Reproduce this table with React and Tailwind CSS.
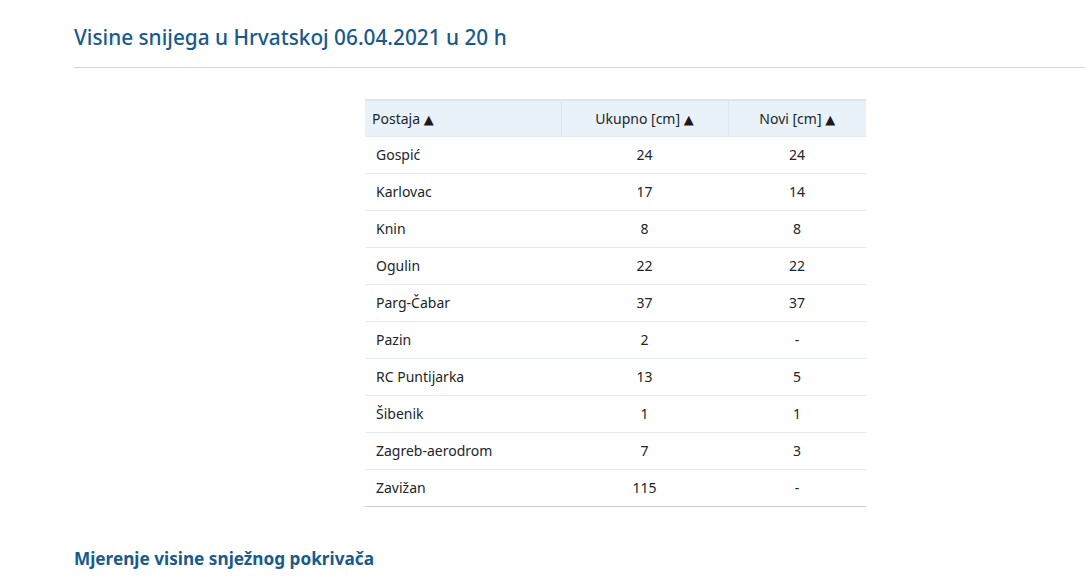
const rows = [
  ['Gospić', '24', '24'],
  ['Karlovac', '17', '14'],
  ['Knin', '8', '8'],
  ['Ogulin', '22', '22'],
  ['Parg-Čabar', '37', '37'],
  ['Pazin', '2', '-'],
  ['RC Puntijarka', '13', '5'],
  ['Šibenik', '1', '1'],
  ['Zagreb-aerodrom', '7', '3'],
  ['Zavižan', '115', '-'],
];

function Arrow() {
  return <span className="font-['DejaVu_Sans',sans-serif] text-[13px] leading-none text-[#1b1b1b]">▲</span>;
}

export default function App() {
  return (
    <div className="min-h-[588px] bg-white font-['Noto_Sans',sans-serif] text-[#212529]">
      <div className="pl-[74px] pt-[21px]">
        {/* Title */}
        <h1 className="text-[20.8px] leading-[32px] font-medium text-[#175a8c]">
          Visine snijega u Hrvatskoj 06.04.2021 u 20 h
        </h1>
        <hr className="mt-[14px] border-0 border-t border-[#d3d9df]" />

        {/* Table */}
        <table className="ml-[291px] mt-[31px] w-[501px] border-collapse text-[14px]">
          <thead>
            <tr className="h-[36px] bg-[#eaf2f9] border-t-2 border-[#dde4ea]">
              <th className="w-[196px] px-[7px] text-left font-normal">Postaja <Arrow /></th>
              <th className="w-[167px] font-normal text-center border-l border-[#dde4ea]">Ukupno [cm] <Arrow /></th>
              <th className="font-normal text-center border-l border-[#dde4ea]">Novi [cm] <Arrow /></th>
            </tr>
          </thead>
          <tbody>
            {rows.map((r, i) => (
              <tr
                key={r[0]}
                className={`h-[37px] border-t border-[#e6e9ec] ${i === rows.length - 1 ? 'border-b border-b-[#c9d0d6]' : ''}`}
              >
                <td className="px-[11px]">{r[0]}</td>
                <td className="text-center">{r[1]}</td>
                <td className="text-center">{r[2]}</td>
              </tr>
            ))}
          </tbody>
        </table>

        {/* Section heading */}
        <h2 className="mt-[38px] text-[17.2px] leading-[28px] font-bold text-[#175a8c]">
          Mjerenje visine snježnog pokrivača
        </h2>
      </div>
    </div>
  );
}
